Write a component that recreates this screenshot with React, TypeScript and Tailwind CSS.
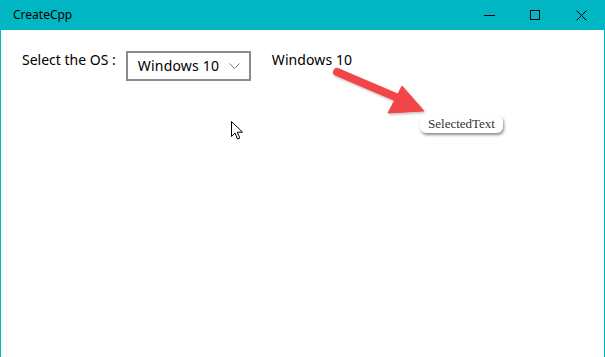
export default function App() {
  return (
    <div className="relative w-[605px] h-[357px] flex flex-col bg-white overflow-hidden">
      {/* TITLE BAR */}
      <div className="h-[30px] shrink-0 bg-[#00b7c3] flex items-center justify-between">
        <span className="pl-[13px] text-[12px] text-black font-['Noto_Sans',sans-serif]">
          CreateCpp
        </span>
        <div className="flex h-full pr-[1px]">
          <button className="w-[46px] h-full flex items-center justify-center">
            <span className="block w-[11px] h-px bg-black" />
          </button>
          <button className="w-[46px] h-full flex items-center justify-center">
            <span className="block w-[10px] h-[10px] border border-black" />
          </button>
          <button className="w-[46px] h-full flex items-center justify-center">
            <svg width="11" height="11" viewBox="0 0 11 11">
              <path d="M0.5 0.5 L10.5 10.5 M10.5 0.5 L0.5 10.5" stroke="#000" strokeWidth="1" />
            </svg>
          </button>
        </div>
      </div>

      {/* CONTENT */}
      <div className="flex-1 border-x border-[#00b7c3] pt-[21px] pl-[21px] font-['Noto_Sans',sans-serif] text-[14px] text-black">
        <div className="flex items-start">
          <span className="leading-[20px] mt-[-1px]">Select the OS :</span>
          <div className="ml-[10px] w-[125px] h-[30px] border-2 border-[#8c8c8c] flex items-center justify-between pl-[10px] pr-[9px]">
            <span className="leading-[20px] tracking-[0.2px]">Windows 10</span>
            <svg width="11" height="6" viewBox="0 0 11 6">
              <path d="M0.5 0.5 L5.5 5.5 L10.5 0.5" fill="none" stroke="#777" strokeWidth="1" />
            </svg>
          </div>
          <span className="ml-[21px] leading-[20px] mt-[-1px] tracking-[0.1px]">Windows 10</span>
        </div>
      </div>

      {/* ANNOTATION ARROW */}
      <svg className="absolute left-0 top-0 pointer-events-none" width="605" height="357">
        <defs>
          <filter id="sh" x="-20%" y="-20%" width="140%" height="140%">
            <feDropShadow dx="1" dy="1.5" stdDeviation="1" floodColor="#000" floodOpacity="0.25" />
          </filter>
        </defs>
        <g filter="url(#sh)" fill="#f2454a" stroke="#f2454a">
          <line x1="337" y1="72" x2="398" y2="98" strokeWidth="8" strokeLinecap="round" />
          <polygon points="402,86 424,111 388,113" strokeWidth="1" strokeLinejoin="round" />
        </g>
      </svg>

      {/* SELECTED TEXT CALLOUT */}
      <div className="absolute left-[420px] top-[115px] h-[18px] w-[83px] flex items-center justify-center bg-white rounded-[6px] shadow-[1px_2px_3px_rgba(0,0,0,0.45)] font-['Liberation_Serif',serif] text-[13px] text-[#333]">
        SelectedText
      </div>

      {/* MOUSE CURSOR */}
      <svg className="absolute left-[231px] top-[121px]" width="13" height="20" viewBox="0 0 13 20">
        <path
          d="M0.5 0.5 L0.5 15.5 L4 12 L6.5 18 L8.8 17 L6.3 11.2 L11.5 11.2 Z"
          fill="#fff"
          stroke="#000"
          strokeWidth="1"
          strokeLinejoin="round"
        />
      </svg>
    </div>
  );
}
